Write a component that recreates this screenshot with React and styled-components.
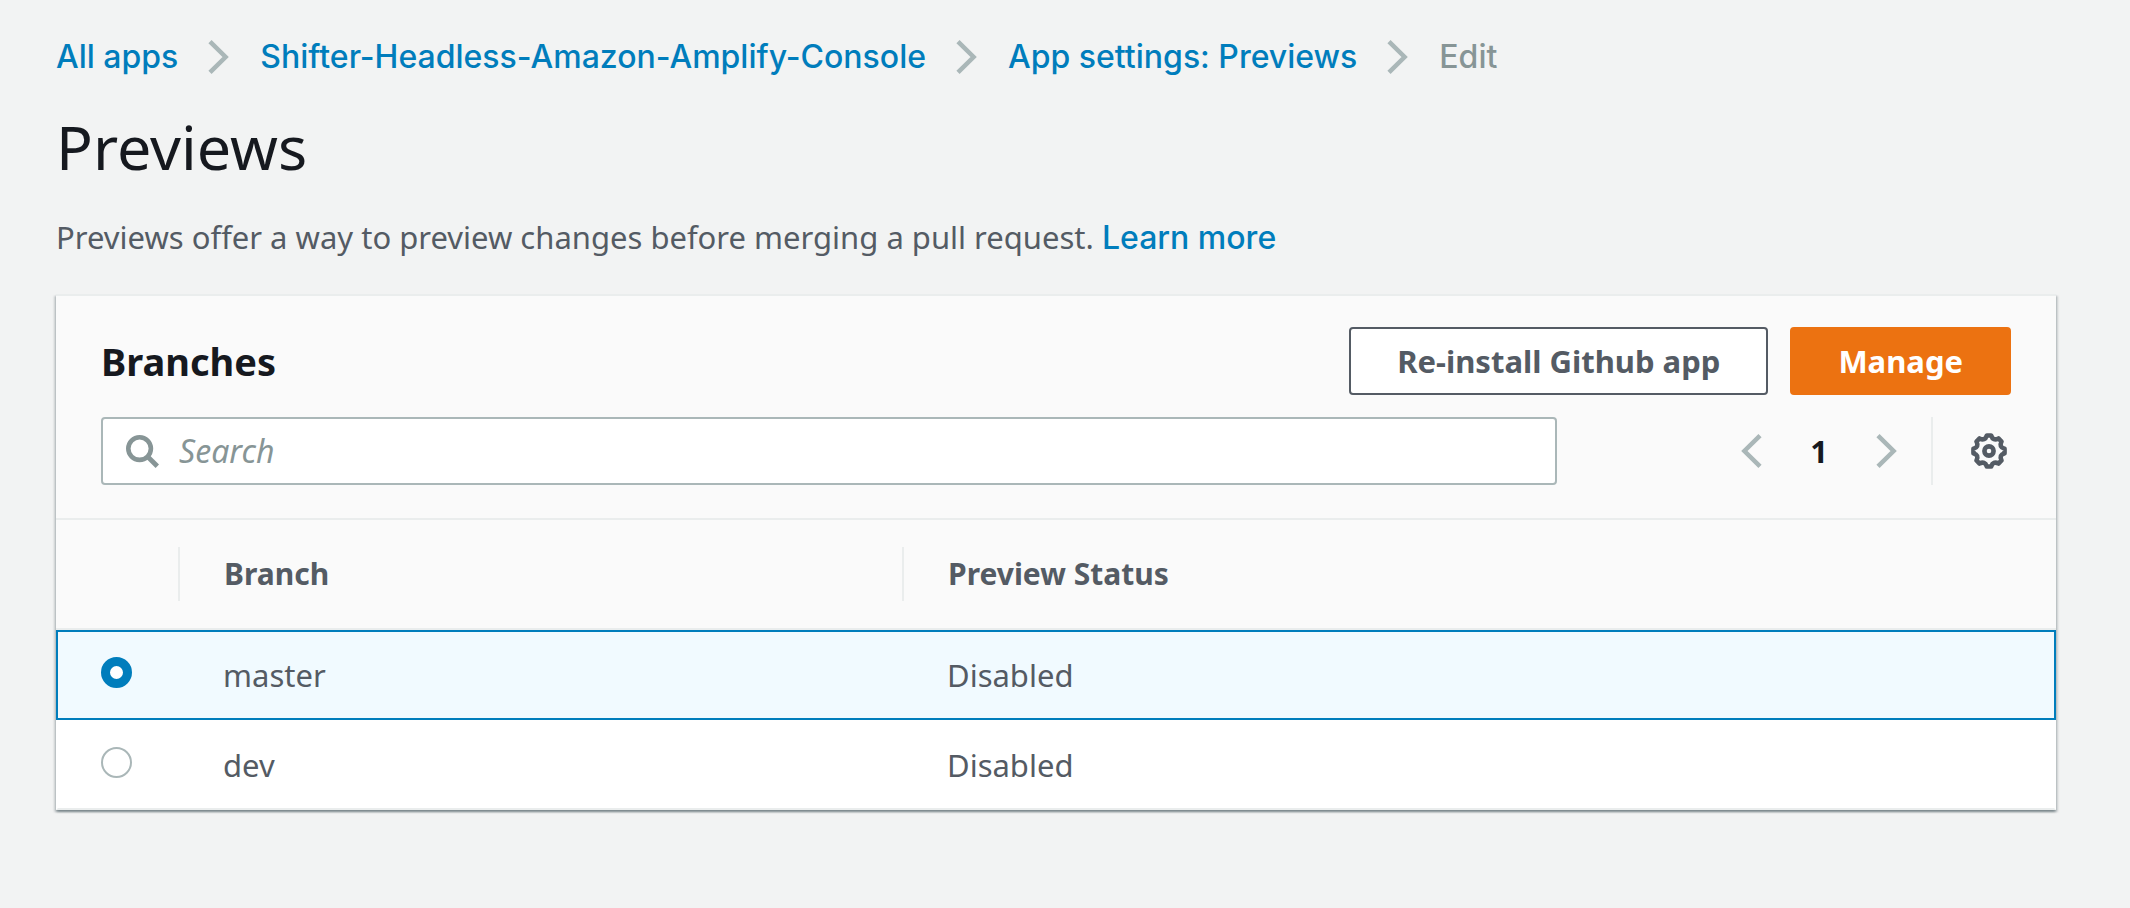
import { useState } from 'react';
import styled, { createGlobalStyle, css } from 'styled-components';

const GlobalStyle = createGlobalStyle`
    *, *::before, *::after {
        box-sizing: border-box;
    }
    body {
        margin: 0;
        background: #f2f3f3;
        color: #545b64;
        font-family: 'Noto Sans', 'Open Sans', sans-serif;
        font-size: 31px;
        line-height: 44px;
    }
    button, input {
        font: inherit;
        margin: 0;
    }
`;

const Page = styled.main`
    padding: 37px 74px 96px 56px;
`;

const Breadcrumbs = styled.nav`
    display: flex;
    align-items: center;
    font-family: Inter, sans-serif;
    font-size: 32px;
    font-weight: 500;
    line-height: 40px;
    color: #879596;
    svg {
        margin: 0 31px 0 30px;
    }
`;

const TextLink = styled.a`
    font-family: Inter, sans-serif;
    font-size: 32px;
    font-weight: 500;
    line-height: 40px;
    color: #007dbc;
    text-decoration: none;
    &:hover {
        text-decoration: underline;
    }
`;

const Title = styled.h1`
    margin: 28px 0 26px;
    font-size: 61px;
    font-weight: 400;
    line-height: 84px;
    color: #16191f;
`;

const Description = styled.p`
    margin: 0 0 35px;
`;

const Panel = styled.section`
    background: #fff;
    border-top: 2px solid #eaeded;
    box-shadow: 0 2px 2px rgba(0, 28, 36, 0.3), 2px 2px 2px rgba(0, 28, 36, 0.15),
        -2px 2px 2px rgba(0, 28, 36, 0.15);
`;

const PanelHeader = styled.header`
    display: grid;
    gap: 22px;
    padding: 31px 45px 33px;
    background: #fafafa;
    border-bottom: 2px solid #eaeded;
`;

const HeaderRow = styled.div`
    display: flex;
    align-items: center;
    justify-content: space-between;
`;

const PanelTitle = styled.h2`
    margin: 0;
    font-size: 38px;
    font-weight: 700;
    color: #16191f;
`;

const Actions = styled.div`
    display: flex;
    gap: 22px;
`;

const Button = styled.button`
    height: 68px;
    padding: 0 46px;
    border: 2px solid ${p => (p.$primary ? '#ec7211' : '#545b64')};
    border-radius: 4px;
    background: ${p => (p.$primary ? '#ec7211' : '#fff')};
    color: ${p => (p.$primary ? '#fff' : '#545b64')};
    font-size: 31px;
    font-weight: 700;
    cursor: pointer;
`;

const SearchBox = styled.label`
    flex: 1;
    display: flex;
    align-items: center;
    gap: 20px;
    height: 68px;
    padding: 0 23px;
    background: #fff;
    border: 2px solid #aab7b8;
    border-radius: 4px;
    color: #879596;
`;

const SearchInput = styled.input`
    flex: 1;
    min-width: 0;
    padding: 0;
    border: 0;
    outline: 0;
    background: transparent;
    color: #16191f;
    font-size: 32px;
    &::placeholder {
        color: #879596;
        font-style: italic;
        opacity: 1;
    }
`;

const Pagination = styled.div`
    display: flex;
    align-items: center;
    gap: 48px;
    margin-left: 184px;
    padding-right: 34px;
    height: 68px;
    border-right: 2px solid #eaeded;
    color: #16191f;
    font-weight: 700;
`;

const IconButton = styled.button`
    display: flex;
    padding: 0;
    border: 0;
    background: none;
    color: ${p => p.$color};
    cursor: pointer;
`;

const Settings = styled.div`
    padding: 0 4px 0 38px;
`;

const Table = styled.table`
    width: 100%;
    table-layout: fixed;
    border-collapse: separate;
    border-spacing: 0;
    text-align: left;
`;

const HeadCell = styled.th`
    width: ${p => p.$width};
    padding: 27px 0;
    background: #fafafa;
    border-bottom: 2px solid #eaeded;
    font-size: 30px;
    font-weight: 700;
`;

const HeadLabel = styled.div`
    display: flex;
    align-items: center;
    height: 54px;
    padding-left: 44px;
    border-right: ${p => (p.$last ? '0' : '2px solid #eaeded')};
`;

const selectedRow = css`
    background: #f1faff;
    td {
        border-color: #007dbc;
    }
`;

const Row = styled.tr`
    td {
        height: 90px;
        padding: 0 0 0 43px;
        border: 0 solid transparent;
        border-width: 2px 0;
    }
    td:first-child {
        border-left-width: 2px;
    }
    td:last-child {
        border-right-width: 2px;
    }
    &:last-child td {
        border-bottom-color: #eaeded;
    }
    ${p => p.$selected && selectedRow}
`;

const RadioCell = styled.td`
    vertical-align: top;
`;

const Radio = styled.input`
    appearance: none;
    display: block;
    width: 31px;
    height: 31px;
    margin-top: 25px;
    border: ${p => (p.checked ? '9px solid #007dbc' : '2px solid #aab7b8')};
    border-radius: 50%;
    background: #fff;
    cursor: pointer;
`;

const Chevron = ({ left }) => (
    <svg width="21" height="34" viewBox="0 0 21 34" fill="none" stroke="#aab7b8" strokeWidth="4.5" aria-hidden="true">
        <path d={left ? 'M19 1.6 3.4 17 19 32.4' : 'M2 1.6 17.6 17 2 32.4'} />
    </svg>
);

const SearchIcon = () => (
    <svg width="33" height="33" viewBox="0 0 33 33" fill="none" stroke="currentColor" aria-hidden="true">
        <circle cx="13.6" cy="13.6" r="11.3" strokeWidth="4.6" />
        <path d="M21.5 21.5 31.3 31.3" strokeWidth="4.8" />
    </svg>
);

// eight flat teeth joined by curved notches
const polar = (r, deg) => {
    const a = (deg * Math.PI) / 180;
    return `${(18 + r * Math.sin(a)).toFixed(2)} ${(18 - r * Math.cos(a)).toFixed(2)}`;
};
const gearPath =
    [0, 45, 90, 135, 180, 225, 270, 315]
        .map((a, i) => `${i ? 'L' : 'M'}${polar(15.7, a - 8)}L${polar(15.7, a + 8)}Q${polar(10.5, a + 22.5)} ${polar(15.7, a + 37)}`)
        .join('') + 'Z';

const GearIcon = () => (
    <svg width="36" height="36" viewBox="0 0 36 36" fill="none" stroke="currentColor" strokeWidth="4.6" aria-hidden="true">
        <path d={gearPath} strokeLinejoin="round" />
        <circle cx="18" cy="18" r="4.6" />
    </svg>
);

const branches = [
    { name: 'master', status: 'Disabled' },
    { name: 'dev', status: 'Disabled' }
];

const App = () => {
    const [selected, setSelected] = useState('master');
    const [query, setQuery] = useState('');

    return (
        <>
            <GlobalStyle />
            <Page>
                <Breadcrumbs aria-label="Breadcrumbs">
                    <TextLink href="#apps">All apps</TextLink>
                    <Chevron />
                    <TextLink href="#app">Shifter-Headless-Amazon-Amplify-Console</TextLink>
                    <Chevron />
                    <TextLink href="#previews">App settings: Previews</TextLink>
                    <Chevron />
                    <span>Edit</span>
                </Breadcrumbs>
                <Title>Previews</Title>
                <Description>
                    Previews offer a way to preview changes before merging a pull request.{' '}
                    <TextLink href="#learn-more">Learn more</TextLink>
                </Description>
                <Panel>
                    <PanelHeader>
                        <HeaderRow>
                            <PanelTitle>Branches</PanelTitle>
                            <Actions>
                                <Button type="button">Re-install Github app</Button>
                                <Button type="button" $primary>
                                    Manage
                                </Button>
                            </Actions>
                        </HeaderRow>
                        <HeaderRow>
                            <SearchBox>
                                <SearchIcon />
                                <SearchInput
                                    type="text"
                                    placeholder="Search"
                                    aria-label="Search"
                                    value={query}
                                    onChange={e => setQuery(e.target.value)}
                                />
                            </SearchBox>
                            <Pagination>
                                <IconButton type="button" aria-label="Previous page">
                                    <Chevron left />
                                </IconButton>
                                <span>1</span>
                                <IconButton type="button" aria-label="Next page">
                                    <Chevron />
                                </IconButton>
                            </Pagination>
                            <Settings>
                                <IconButton type="button" aria-label="Preferences" $color="#545b64">
                                    <GearIcon />
                                </IconButton>
                            </Settings>
                        </HeaderRow>
                    </PanelHeader>
                    <Table>
                        <thead>
                            <tr>
                                <HeadCell $width="124px">
                                    <HeadLabel />
                                </HeadCell>
                                <HeadCell $width="36.2%">
                                    <HeadLabel>Branch</HeadLabel>
                                </HeadCell>
                                <HeadCell>
                                    <HeadLabel $last>Preview Status</HeadLabel>
                                </HeadCell>
                            </tr>
                        </thead>
                        <tbody>
                            {branches
                                .filter(b => b.name.includes(query))
                                .map(b => (
                                    <Row key={b.name} $selected={b.name === selected}>
                                        <RadioCell>
                                            <Radio
                                                type="radio"
                                                name="branch"
                                                aria-label={b.name}
                                                checked={b.name === selected}
                                                onChange={() => setSelected(b.name)}
                                            />
                                        </RadioCell>
                                        <td>{b.name}</td>
                                        <td>{b.status}</td>
                                    </Row>
                                ))}
                        </tbody>
                    </Table>
                </Panel>
            </Page>
        </>
    );
};

export default App;
